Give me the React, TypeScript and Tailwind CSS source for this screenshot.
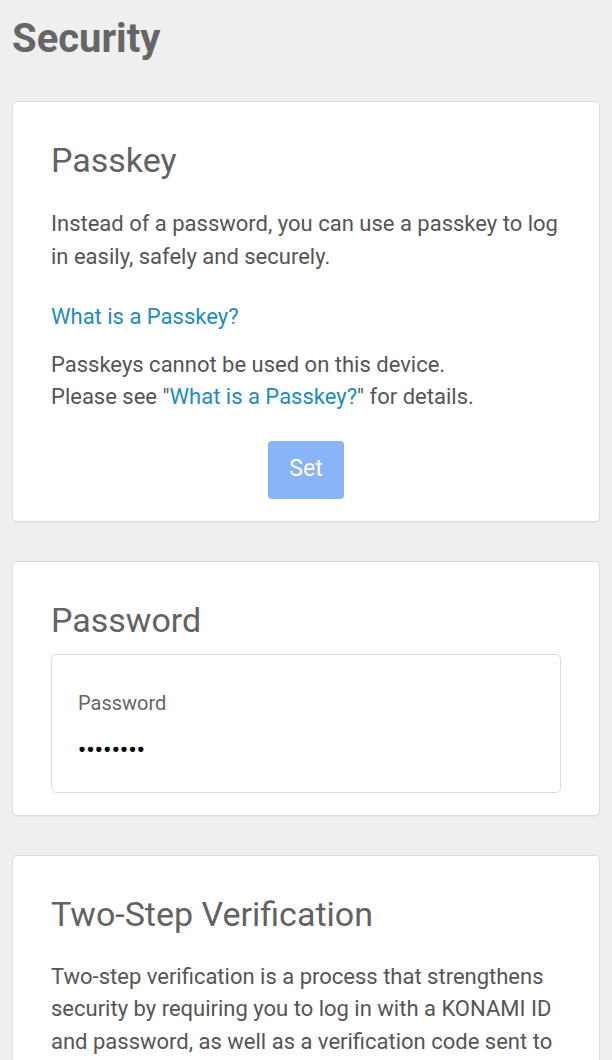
import React from "react";

const font = { fontFamily: "Roboto, 'Noto Sans', sans-serif" };

function Card({ children }: { children: React.ReactNode }) {
  return (
    <div className="bg-white border border-[#dcdcdc] rounded-[5px] px-[38px] pt-[38px] pb-[22px] shadow-[0_1px_1px_rgba(0,0,0,0.04)]">
      {children}
    </div>
  );
}

function Heading({ children }: { children: React.ReactNode }) {
  return <h2 className="text-[34px] leading-[40px] text-[#626262] font-normal">{children}</h2>;
}

export default function App() {
  return (
    <div className="min-h-[1060px] bg-[#efefef] px-[12px] pt-[15px] pb-10" style={font}>
      <h1 className="text-[40px] leading-[47px] font-bold text-[#666666]">Security</h1>
      <div className="mt-[39px] flex flex-col gap-[39px]">
        <Card>
          <Heading>Passkey</Heading>
          <p className="mt-[28px] text-[22px] leading-[32.5px] text-[#555555] whitespace-nowrap">
            Instead of a password, you can use a passkey to log
            <br />
            in easily, safely and securely.
          </p>
          <p className="mt-[28px] text-[22px] leading-[32.5px]">
            <a href="#" className="text-[#1e8bc3]">What is a Passkey?</a>
          </p>
          <p className="mt-[15px] text-[22px] leading-[32.5px] text-[#555555] whitespace-nowrap">
            Passkeys cannot be used on this device.
            <br />
            Please see "<a href="#" className="text-[#1e8bc3]">What is a Passkey?</a>" for details.
          </p>
          <div className="mt-[27px] flex justify-center">
            <button className="w-[76px] h-[58px] rounded-[4px] bg-[#8ab4f8] text-white text-[23px]">Set</button>
          </div>
        </Card>
        <Card>
          <Heading>Password</Heading>
          <div className="mt-[14px] border border-[#dcdcdc] rounded-[5px] px-[26px] pt-[33px] pb-[27px]">
            <div className="text-[20px] leading-[30px] text-[#666666]">Password</div>
            <div className="mt-[17px] text-[22px] leading-[30px] text-black font-bold tracking-[0.5px]">••••••••</div>
          </div>
        </Card>
        <Card>
          <Heading>Two-Step Verification</Heading>
          <p className="mt-[27px] text-[22px] leading-[32.5px] text-[#555555] whitespace-nowrap">
            Two-step verification is a process that strengthens
            <br />
            security by requiring you to log in with a KONAMI ID
            <br />
            and password, as well as a verification code sent to
          </p>
        </Card>
      </div>
    </div>
  );
}
